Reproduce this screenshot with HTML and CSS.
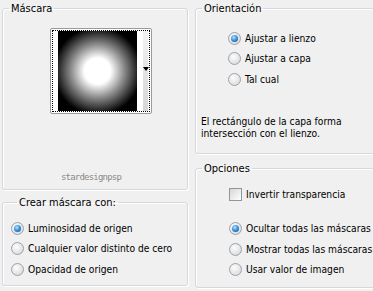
FILE: index.html
```html
<!DOCTYPE html>
<html lang="es">
<head>
<meta charset="utf-8">
<link rel="stylesheet" href="styles.css">
</head>
<body>
<div class="dialog">
  <div class="col col-left">
    <fieldset class="group g-mask">
      <legend>Máscara</legend>
      <div class="preview">
        <div class="focus">
          <div class="pad"></div>
          <div class="mask-img"></div>
          <div class="gap"></div>
          <div class="strip"><span class="arrow"></span></div>
        </div>
      </div>
      <div class="credit">stardesignpsp</div>
    </fieldset>
    <fieldset class="group g-create">
      <legend>Crear máscara con:</legend>
      <div class="opt"><span class="radio on"></span>Luminosidad de origen</div>
      <div class="opt"><span class="radio"></span>Cualquier valor distinto de cero</div>
      <div class="opt"><span class="radio"></span>Opacidad de origen</div>
    </fieldset>
  </div>
  <div class="col col-right">
    <fieldset class="group g-orient">
      <legend>Orientación</legend>
      <div class="opts-orient">
        <div class="opt"><span class="radio on"></span>Ajustar a lienzo</div>
        <div class="opt"><span class="radio"></span>Ajustar a capa</div>
        <div class="opt"><span class="radio"></span>Tal cual</div>
      </div>
      <p class="desc">El rectángulo de la capa forma intersección con el lienzo.</p>
    </fieldset>
    <fieldset class="group g-opts">
      <legend>Opciones</legend>
      <div class="opts-inner">
        <div class="opt"><span class="check"></span>Invertir transparencia</div>
        <div class="radios">
          <div class="opt"><span class="radio on"></span>Ocultar todas las máscaras</div>
          <div class="opt"><span class="radio"></span>Mostrar todas las máscaras</div>
          <div class="opt"><span class="radio"></span>Usar valor de imagen</div>
        </div>
      </div>
    </fieldset>
  </div>
</div>
</body>
</html>
```

FILE: styles.css
```css
html, body {
  margin: 0;
  padding: 0;
  background: #f0f0f0;
}
body {
  width: 373px;
  height: 291px;
  overflow: hidden;
  font-family: "DejaVu Sans Condensed", "Liberation Sans", sans-serif;
  font-size: 10.2px;
  color: #000;
}
.dialog {
  display: flex;
  gap: 7px;
  padding: 1px 0 0 2px;
}
.col {
  display: flex;
  flex-direction: column;
  flex: none;
}
.col-left { width: 186px; }
.col-right { width: 182px; }

.group {
  box-sizing: border-box;
  margin: 0;
  border: 1px solid #d3d9dd;
  border-radius: 3px;
  box-shadow: inset 1px 1px 0 #fff, 1px 1px 0 #fff;
  padding: 0;
  min-width: 0;
}
.group legend {
  padding: 0 2px;
  margin-left: 6px;
  line-height: 15px;
  height: 15px;
  font-size: 11px;
}

/* Máscara */
.g-mask {
  height: 189px;
  display: flex;
  flex-direction: column;
  align-items: center;
}
.preview {
  margin-top: 12px;
  margin-left: 12px;
  width: 102px;
  height: 86px;
  box-sizing: border-box;
  border: 1px solid #9a9a9a;
  border-radius: 2px;
  background: #fff;
  padding: 1px;
}
.focus {
  box-sizing: border-box;
  height: 100%;
  border: 1px dotted #000;
  display: flex;
}
.pad { width: 5px; }
.mask-img {
  width: 79px;
  background: radial-gradient(circle at 50% 50%, #fff 0, #fff 13px, #888 27px, #000 44px);
}
.gap { width: 6px; }
.strip {
  width: 5px;
  background: linear-gradient(to bottom, #f2f2f2, #d6d6d6);
  position: relative;
}
.arrow {
  position: absolute;
  left: 0;
  top: 36px;
  width: 0;
  height: 0;
  border-left: 3px solid transparent;
  border-right: 3px solid transparent;
  border-top: 4px solid #000;
}
.credit {
  margin-top: 58px;
  margin-right: 8px;
  font-family: "DejaVu Sans Mono", monospace;
  font-size: 9px;
  letter-spacing: -0.8px;
  color: #8a8a8a;
}

/* Crear máscara */
.g-create {
  margin-top: 5px;
  height: 91px;
  padding: 8px 0 0 8px;
}

.opt {
  display: flex;
  align-items: center;
  height: 20.5px;
  white-space: nowrap;
}
.radio {
  box-sizing: border-box;
  width: 13px;
  height: 13px;
  border-radius: 50%;
  border: 1px solid #9aa3ac;
  background: radial-gradient(circle at 40% 35%, #fdfdfd 0, #e6e6e6 55%, #cfcfcf 100%);
  margin-right: 4px;
  position: relative;
  flex: none;
}
.radio.on::after {
  content: "";
  position: absolute;
  left: 2px;
  top: 2px;
  width: 7px;
  height: 7px;
  border-radius: 50%;
  background: radial-gradient(circle at 40% 35%, #b9e3ff 0, #3d97e3 45%, #0a3f86 100%);
}
.check {
  box-sizing: border-box;
  width: 13px;
  height: 13px;
  border: 1px solid #8f979e;
  background: linear-gradient(135deg, #d6d6d6 0, #efefef 60%, #fff 100%);
  margin-right: 4px;
  flex: none;
}

/* Orientación */
.g-orient {
  height: 153px;
}
.opts-orient {
  padding: 12px 0 0 32px;
}
.desc {
  margin: 26px 0 0 5px;
  line-height: 12px;
  width: 170px;
}

/* Opciones */
.g-opts {
  margin-top: 7px;
  height: 127px;
}
.opts-inner {
  padding: 8px 0 0 33px;
}
.radios {
  margin-top: 14px;
}
```
